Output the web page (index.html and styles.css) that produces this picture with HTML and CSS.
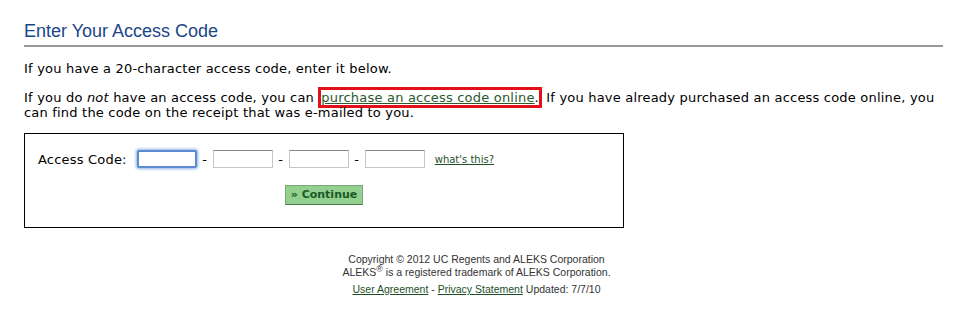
FILE: index.html
```html
<!DOCTYPE html>
<html lang="en">
<head>
  <meta charset="UTF-8">
  <meta name="viewport" content="width=device-width, initial-scale=1.0">
  <title>Enter Your Access Code</title>
  <link rel="stylesheet" href="styles.css">
</head>
<body>
  <div class="page">
    <h1 class="title">Enter Your Access Code</h1>

    <p class="intro">If you have a 20-character access code, enter it below.</p>
    <p class="intro">If you do <em>not</em> have an access code, you can <span class="mark"><a href="#">purchase an access code online</a>.</span> If you have already purchased an access code online, you can find the code on the receipt that was e-mailed to you.</p>

    <form class="code-box">
      <div class="code-row">
        <label class="code-label" for="code1">Access Code:</label>
        <input class="code-input focused" id="code1" type="text" maxlength="5">
        <span class="dash">-</span>
        <input class="code-input" type="text" maxlength="5">
        <span class="dash">-</span>
        <input class="code-input" type="text" maxlength="5">
        <span class="dash">-</span>
        <input class="code-input" type="text" maxlength="5">
        <a class="help" href="#">what's this?</a>
      </div>
      <div class="code-actions">
        <button class="btn-continue" type="button">&raquo; Continue</button>
      </div>
    </form>

    <div class="footer">
      <div>Copyright &copy; 2012 UC Regents and ALEKS Corporation</div>
      <div>ALEKS<sup>&reg;</sup> is a registered trademark of ALEKS Corporation.</div>
      <div class="footer-links"><a href="#">User Agreement</a> - <a href="#">Privacy Statement</a> Updated: 7/7/10</div>
    </div>
  </div>
</body>
</html>
```

FILE: styles.css
```css
body{
  margin: 0;
  background: #fff;
  color: #000;
  font-family: "DejaVu Sans", Verdana, sans-serif;
  font-size: 13px;
}

.page{
  padding: 21px 17px 0 24px;
}

.title{
  margin: 0;
  padding-bottom: 3px;
  font-family: "Liberation Sans", Arial, sans-serif;
  font-size: 18px;
  font-weight: normal;
  color: #1b4589;
  border-bottom: 2px solid #999;
}

.intro{
  margin: 14px 0 0;
  line-height: 15px;
  letter-spacing: 0.2px;
}
.intro + .intro{
  margin-top: 14px;
}

.intro a{
  color: #2b5a2b;
}

.mark{
  border: 3px solid #e3101a;
}

.code-box{
  width: 572px;
  margin: 13px 0 0;
  padding: 16px 13px 22px;
  border: 1px solid #000;
}

.code-row{
  display: flex;
  align-items: center;
}

.code-label{
  margin-right: 10px;
  letter-spacing: 0.2px;
}

.code-input{
  width: 56px;
  height: 14px;
  padding: 1px;
  margin: 0;
  border: 1px solid #c6c6c6;
  border-top-color: #888;
  font-size: 12px;
  outline: none;
}
.code-input.focused{
  border: 2px solid #5b8bd0;
  border-radius: 2px;
  box-shadow: 0 0 3px 1px #8fb4e6;
  width: 54px;
  height: 12px;
}

.dash{
  width: 16px;
  text-align: center;
}

.help{
  margin-left: 10px;
  font-size: 10px;
  color: #1d4f28;
}

.code-actions{
  margin-top: 17px;
  text-align: center;
}

.btn-continue{
  padding: 2px 5px 3px;
  background: #93cf8f;
  border: 1px solid #7aa877;
  border-bottom-color: #4d7a4d;
  color: #1a5a27;
  font-family: "DejaVu Sans", Verdana, sans-serif;
  font-size: 11px;
  font-weight: bold;
}

.footer{
  margin-top: 25px;
  padding-right: 14px;
  text-align: center;
  font-family: "Liberation Sans", Arial, sans-serif;
  font-size: 10.5px;
  line-height: 13px;
  color: #333;
}
.footer sup{
  font-size: 9px;
  line-height: 0;
}
.footer-links{
  margin-top: 4px;
}
.footer a{
  color: #1d4f28;
}
```
